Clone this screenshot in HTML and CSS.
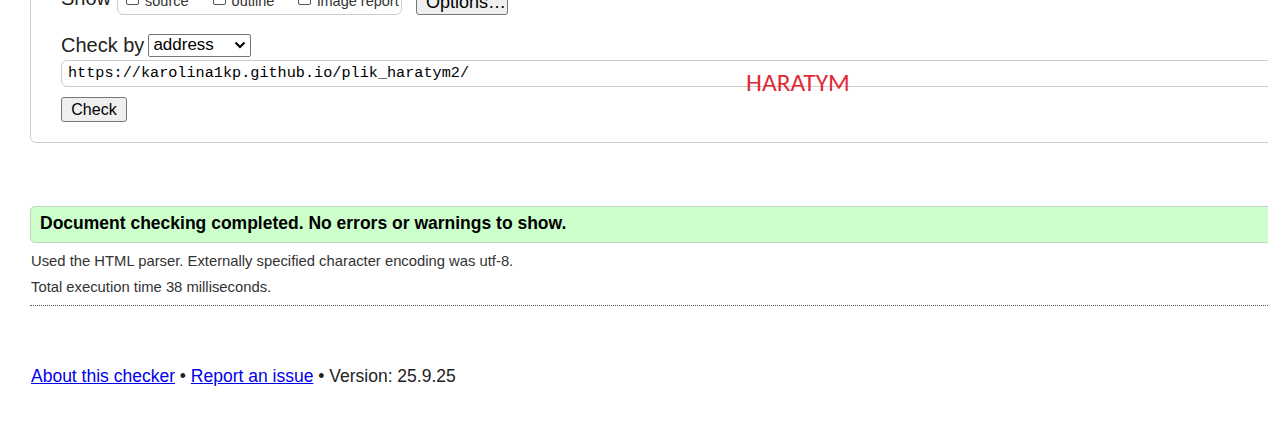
FILE: index.html
```html
<!DOCTYPE html>
<html>
<head>
<meta charset="utf-8">
<link rel="stylesheet" href="styles.css">
</head>
<body>
<div class="page">
  <form class="checker">
    <div class="show-row">
      <span class="label">Show</span>
      <div class="opts">
        <label class="opt"><span class="box"></span>source</label>
        <label class="opt"><span class="box"></span>outline</label>
        <label class="opt"><span class="box"></span>image report</label>
      </div>
      <button type="button" class="btn opts-btn">Options…</button>
    </div>
    <div class="by-row">
      <span class="label">Check by</span>
      <span class="select">address<svg width="12" height="8" viewBox="0 0 12 8"><path d="M1.5 1.5 L6 6 L10.5 1.5" fill="none" stroke="#000" stroke-width="2"/></svg></span>
    </div>
    <div class="url">https://karolina1kp.github.io/plik_haratym2/</div>
    <div class="submit-row"><button type="button" class="btn check-btn">Check</button></div>
  </form>
  <div class="stamp">HARATYM</div>

  <div class="success">Document checking completed. No errors or warnings to show.</div>
  <p class="info">Used the HTML parser. Externally specified character encoding was utf-8.</p>
  <p class="info">Total execution time 38 milliseconds.</p>
  <div class="sep"></div>

  <p class="footer"><a href="#">About this checker</a> • <a href="#">Report an issue</a> • Version: 25.9.25</p>
</div>
</body>
</html>
```

FILE: styles.css
```css
html, body {
  margin: 0;
  padding: 0;
  overflow: hidden;
  background: #fff;
}
body {
  font-family: "Liberation Sans", Arial, sans-serif;
  color: #222;
}
.page {
  position: relative;
  padding-left: 30px;
  width: 1300px;
}
.checker {
  margin-top: -25px;
  border: 1px solid #ccc;
  border-radius: 0 0 6px 6px;
  padding: 0 0 20px 30px;
  display: flex;
  flex-direction: column;
  align-items: flex-start;
}
.show-row {
  display: flex;
  align-items: flex-end;
  height: 39px;
}
.label {
  font-size: 20px;
  color: #222;
}
.show-row .label {
  margin-bottom: 5px;
}
.opts {
  margin: 0 0 0 6px;
  border: 1px solid #ccc;
  border-radius: 6px;
  padding: 12px 6px 5px 8px;
  display: flex;
  white-space: nowrap;
  width: 285px;
  box-sizing: border-box;
}
.opt {
  font-size: 14.5px;
  color: #333;
  display: flex;
  align-items: center;
  margin-right: 24px;
  white-space: nowrap;
}
.opt:last-child { margin-right: 0; }
.box {
  width: 13px;
  height: 13px;
  border: 1px solid #555;
  border-radius: 2px;
  margin-right: 6px;
  box-sizing: border-box;
  position: relative;
  top: -3px;
}
.btn {
  font-family: "Liberation Sans", Arial, sans-serif;
  font-size: 16px;
  color: #000;
  background: #efefef;
  border: 1px solid #767676;
  border-radius: 3px;
  padding: 0 9px;
  height: 25px;
  line-height: 23px;
}
.opts-btn {
  margin-left: 14px;
  width: 92px;
  margin-bottom: 0;
  font-size: 18px;
}
.by-row {
  display: flex;
  align-items: center;
  margin-top: 19px;
  height: 22px;
}
.select {
  margin-left: 4px;
  width: 103px;
  height: 23px;
  box-sizing: border-box;
  border: 1px solid #767676;
  border-radius: 2px;
  font-size: 17px;
  color: #000;
  padding-left: 4px;
  display: flex;
  align-items: center;
  justify-content: space-between;
  padding-right: 4px;
}
.url {
  margin-top: 4px;
  width: 1300px;
  height: 27px;
  box-sizing: border-box;
  border: 1px solid #ccc;
  border-radius: 6px;
  font-family: "Liberation Mono", "DejaVu Sans Mono", monospace;
  font-size: 15.2px;
  color: #000;
  padding: 3px 6px;
  line-height: 19px;
}
.submit-row {
  margin-top: 10px;
}
.check-btn {
  width: 66px;
}
.stamp {
  position: absolute;
  left: 746px;
  top: 92px;
  font-family: Carlito, "Open Sans", "Liberation Sans", sans-serif;
  font-size: 25.5px;
  color: #e02b36;
}
.success {
  margin-top: 63px;
  height: 37px;
  box-sizing: border-box;
  border: 1px solid #c6d4c6;
  border-radius: 5px 0 0 5px;
  background: #ccffcc;
  font-weight: bold;
  font-size: 17.5px;
  color: #000;
  padding: 6px 9px;
}
.info {
  margin: 10px 0 0 1px;
  font-size: 14.8px;
  color: #333;
  line-height: 17px;
}
.info + .info {
  margin-top: 9px;
}
.sep {
  margin-top: 9px;
  border-top: 1px dotted #555;
}
.footer {
  margin: 60px 0 0 1px;
  font-size: 17.5px;
  color: #222;
}
.footer a {
  color: #0000ee;
}
```
